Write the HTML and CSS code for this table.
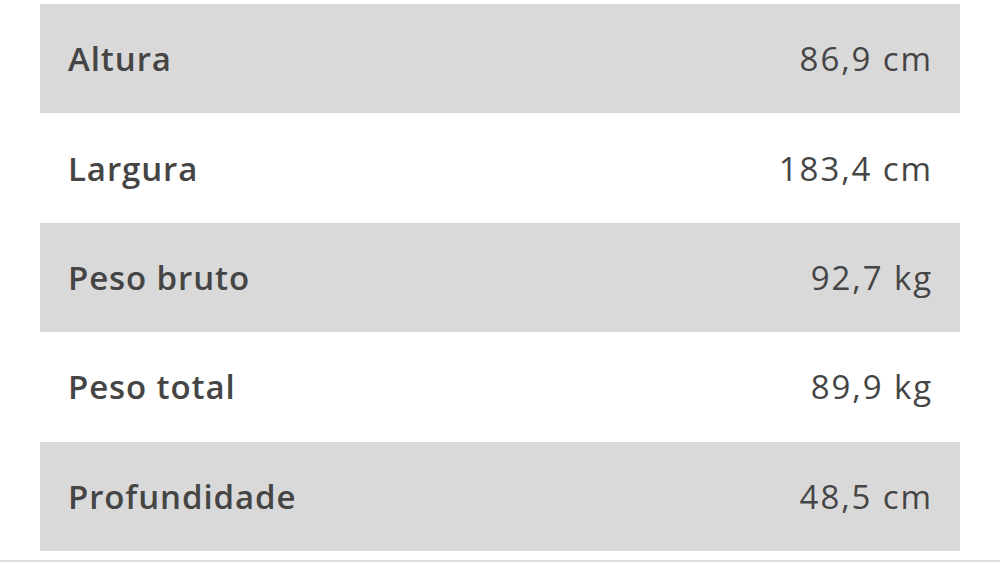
FILE: index.html
```html
<!DOCTYPE html>
<html lang="pt">
<head>
<meta charset="utf-8">
<link rel="stylesheet" href="styles.css">
</head>
<body>
<div class="page">
  <div class="specs">
    <div class="row shaded"><span class="label">Altura</span><span class="value">86,9 cm</span></div>
    <div class="row"><span class="label">Largura</span><span class="value">183,4 cm</span></div>
    <div class="row shaded"><span class="label">Peso bruto</span><span class="value">92,7 kg</span></div>
    <div class="row"><span class="label">Peso total</span><span class="value">89,9 kg</span></div>
    <div class="row shaded"><span class="label">Profundidade</span><span class="value">48,5 cm</span></div>
  </div>
</div>
</body>
</html>
```
FILE: styles.css
```css
html, body {
  margin: 0;
  padding: 0;
  background: #fff;
}
.page {
  width: 1000px;
  height: 562px;
  box-sizing: border-box;
  padding: 4px 40px 0;
  border-bottom: 2px solid #dcdcdc;
  font-family: "Open Sans", "Noto Sans", sans-serif;
  color: #454545;
}
.specs {
  display: flex;
  flex-direction: column;
}
.row {
  height: 109.4px;
  display: flex;
  align-items: center;
  justify-content: space-between;
  padding: 0 27px 0 28px;
  font-size: 33px;
}
.shaded {
  background: #d9d9d9;
}
.label {
  font-weight: 600;
  letter-spacing: 0.9px;
}
.value {
  font-weight: 400;
  letter-spacing: 1.9px;
}
```
